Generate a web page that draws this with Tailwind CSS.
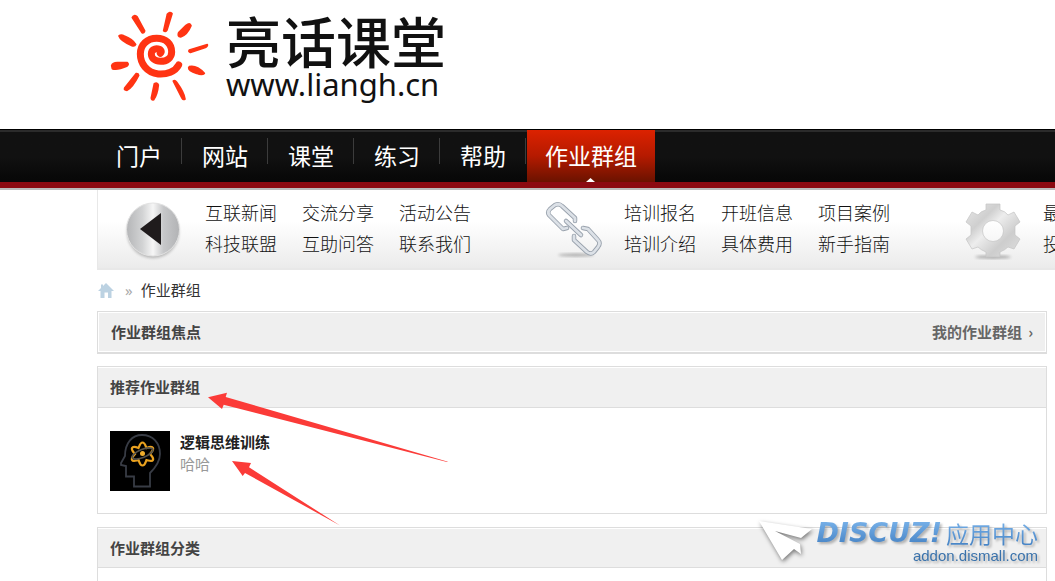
<!DOCTYPE html>
<html lang="zh-CN">
<head>
    <meta charset="UTF-8">
    <meta name="viewport" content="width=device-width, initial-scale=1.0">
    <title>作业群组 - 亮话课堂</title>
    <script src="https://cdn.jsdelivr.net/npm/@tailwindcss/browser@4"></script>
</head>
<body class="relative bg-white text-[#333] text-[15px] font-['Noto_Sans_CJK_SC',sans-serif] overflow-x-hidden">
    <!-- Logo -->
    <header class="pl-[110px] h-[129px]">
        <a href="#" class="inline-flex items-start gap-4 pt-[10px]">
            <svg class="w-[100px] h-[93px] shrink-0" viewBox="30 30 300 279" fill="none" stroke="#ff3413" stroke-linecap="round">
                <path stroke-width="21" d="M236 195C226 215 200 224 175 222C140 218 121 190 121 162C121 134 142 115 170 115C198 115 215 132 215 156C215 174 200 184 182 184C164 184 154 174 154 162C154 150 164 145 174 147C184 149 186 155 181 160"/>
                <g fill="#ff3413" stroke-width="5" stroke-linejoin="round">
                    <path d="M97 53Q101 43 111 50L134 93Q133 100 126 98Z"/>
                    <path d="M202 43Q209 33 216 41L201 90Q196 98 191 92Z"/>
                    <path d="M258 76Q270 67 273 77Q262 104 242 111Q231 110 236 98Z"/>
                    <path d="M57 108Q63 103 73 108Q97 117 107 133Q104 140 96 137Q62 123 57 108Z"/>
                    <path d="M35 197Q38 187 55 188L82 188Q88 193 80 199Q50 212 37 206Z"/>
                    <path d="M268 200Q290 195 313 220Q306 227 290 220Q265 213 266 203Z"/>
                    <path d="M108 221Q115 220 116 226Q98 262 81 271Q71 271 74 264Z"/>
                    <path d="M163 251Q172 246 175 255Q172 285 161 299Q154 301 154 294Z"/>
                    <path d="M322 134Q324 138 314 143L271 157Q264 155 268 150Z"/>
                    <path d="M220 243Q225 240 230 247Q252 277 255 297Q250 301 246 294Z"/>
                </g>
            </svg>
            <span class="flex flex-col text-[#111]">
                <span class="text-[55px] leading-[58px] font-medium">亮话课堂</span>
                <span class="text-[31px] leading-[32px] font-['Noto_Sans',sans-serif]">www.liangh.cn</span>
            </span>
        </a>
    </header>

    <!-- Main nav -->
    <nav class="h-[61px] border-t border-black border-b-2 border-b-[#bbb] bg-[#8c0a11]">
        <div class="h-[52px] border-t-2 border-[#2b2b2b] bg-linear-to-b from-[#111] via-[#111] to-[#070707]">
            <ul class="-mt-[2px] h-[52px] pl-[97px] flex text-[23px] leading-[50px] text-white">
                <li class="flex"><a href="#" class="px-[19px]">门户</a><i class="w-[2px] h-[26px] mt-2 border-l border-[#3c3c3c]"></i></li>
                <li class="flex"><a href="#" class="px-[19px]">网站</a><i class="w-[2px] h-[26px] mt-2 border-l border-[#3c3c3c]"></i></li>
                <li class="flex"><a href="#" class="px-[19px]">课堂</a><i class="w-[2px] h-[26px] mt-2 border-l border-[#3c3c3c]"></i></li>
                <li class="flex"><a href="#" class="px-[19px]">练习</a><i class="w-[2px] h-[26px] mt-2 border-l border-[#3c3c3c]"></i></li>
                <li class="flex"><a href="#" class="px-[19px]">帮助</a><i class="w-[2px] h-[26px] mt-2 border-l border-[#3c3c3c]"></i></li>
                <li class="relative bg-linear-to-b from-[#dc2200] via-[#b51a00] to-[#6b1200]">
                    <a href="#" class="block px-[18px]">作业群组</a>
                    <svg class="absolute bottom-0 left-1/2 -ml-[5px] w-[9px] h-1" viewBox="0 0 9 4" fill="#fff"><path d="M0 4L4.500 0L9 4Z"/></svg>
                </li>
            </ul>
        </div>
    </nav>

    <!-- Sub nav -->
    <div class="ml-[97px] h-20 border-l border-b-2 border-[#e8e8e8] bg-linear-to-b from-white from-40% to-[#ebebeb] overflow-hidden">
        <div class="flex w-max text-[18px] leading-[31px] font-light text-[#111] pt-[7px]">
            <section class="w-[419px] shrink-0 flex">
                <svg class="w-[60px] h-[60px] ml-[25px] mr-[22px] mt-1 shrink-0" viewBox="0 0 60 60">
                    <defs>
                        <linearGradient id="metal" x1="0" y1="0" x2="1" y2="0">
                            <stop offset="0" stop-color="#b4b5b7"/><stop offset=".3" stop-color="#d2d3d4"/>
                            <stop offset=".5" stop-color="#f6f6f6"/><stop offset=".7" stop-color="#c6c7c9"/>
                            <stop offset="1" stop-color="#b2b3b5"/>
                        </linearGradient>
                        <filter id="soft" x="-50%" y="-50%" width="200%" height="200%"><feGaussianBlur stdDeviation="1.5"/></filter>
                    </defs>
                    <circle cx="30" cy="31" r="26" fill="#000" opacity=".25" filter="url(#soft)"/>
                    <circle cx="30" cy="28.500" r="26.500" fill="url(#metal)" stroke="#e3e3e3"/>
                    <path d="M17 28L38 12V44Z" fill="#1f1b1c"/>
                </svg>
                <div class="grid grid-cols-[72px_72px_72px] gap-x-[25px] content-start whitespace-nowrap">
                    <a href="#">互联新闻</a><a href="#">交流分享</a><a href="#">活动公告</a>
                    <a href="#">科技联盟</a><a href="#">互助问答</a><a href="#">联系我们</a>
                </div>
            </section>
            <section class="w-[419px] shrink-0 flex">
                <svg class="w-[60px] h-[60px] ml-[25px] mr-[22px] mt-1 shrink-0" viewBox="0 0 60 60" fill="none" stroke-linecap="round" stroke-linejoin="round">
                    <ellipse cx="34" cy="54" rx="18" ry="1.500" fill="#000" opacity=".3" filter="url(#soft)"/>
                    <g stroke="#98a1ac" stroke-width="4.500">
                        <path d="M25 27L21 28L7 14Q5 11 8 8L13 4Q17 2 20 5L33 17V20"/>
                        <path d="M32 35V39L45 51Q49 54 52 51L56 46Q59 42 56 39L46 28L41 27"/>
                        <path d="M24 20L39 34"/>
                    </g>
                    <g stroke="#dce1e7" stroke-width="2.800">
                        <path d="M25 27L21 28L7 14Q5 11 8 8L13 4Q17 2 20 5L33 17V20"/>
                        <path d="M32 35V39L45 51Q49 54 52 51L56 46Q59 42 56 39L46 28L41 27"/>
                        <path d="M24 20L39 34"/>
                    </g>
                </svg>
                <div class="grid grid-cols-[72px_72px_72px] gap-x-[25px] content-start whitespace-nowrap">
                    <a href="#">培训报名</a><a href="#">开班信息</a><a href="#">项目案例</a>
                    <a href="#">培训介绍</a><a href="#">具体费用</a><a href="#">新手指南</a>
                </div>
            </section>
            <section class="w-[419px] shrink-0 flex">
                <svg class="w-[60px] h-[60px] ml-[25px] mr-[22px] mt-1 shrink-0" viewBox="0 0 60 60">
                    <defs>
                        <linearGradient id="gear" x1="0" y1="0" x2="1" y2="1">
                            <stop offset="0" stop-color="#e8e8e8"/><stop offset=".3" stop-color="#cfcfcf"/>
                            <stop offset=".45" stop-color="#ededed"/><stop offset=".7" stop-color="#cdcdcd"/>
                            <stop offset="1" stop-color="#e0e0e0"/>
                        </linearGradient>
                    </defs>
                    <ellipse cx="32" cy="56" rx="18" ry="1.500" fill="#000" opacity=".35" filter="url(#soft)"/>
                    <path transform="translate(1 -1)" fill="url(#gear)" stroke="#c4c4c4" stroke-width=".7" stroke-linejoin="round" fill-rule="evenodd" d="M24 4H38V10Q43 11 46 15L52 12L58 22L53 26V35L58 39L52 49L46 47Q43 50 38 52V57H24V52Q19 50 16 47L10 49L4 39L9 35V26L4 22L10 12L16 15Q19 11 24 10ZM31 20.500A10.500 10.500 0 1 0 31 41.500A10.500 10.500 0 1 0 31 20.500Z"/>
                </svg>
                <div class="grid grid-cols-[72px_72px_72px] gap-x-[25px] content-start whitespace-nowrap">
                    <a href="#">最新动态</a>
                    <a href="#" class="col-start-1">投诉建议</a>
                </div>
            </section>
        </div>
    </div>

    <main class="ml-[97px] mr-2">
        <!-- Breadcrumb -->
        <div class="h-[41px] flex items-center">
            <a href="#" aria-label="首页">
                <svg class="w-4 h-[15px] ml-px" viewBox="0 0 16 15" fill="#bcd2e2"><path d="M8 0L16 8H13.500V15H10V9.500H6.500V15H2.500V8H0L3 5V1.500H5V3Z"/></svg>
            </a>
            <span class="ml-[11px] mr-2 text-[#aaa] text-[15px] font-['Noto_Sans',sans-serif]">»</span>
            <a href="#">作业群组</a>
        </div>

        <div class="h-[43px] border border-b-2 border-[#ddd] bg-[#efefef] shadow-[inset_0_0_0_1px_#fff] flex items-center justify-between px-[13px] font-bold text-[#444]">
            <h1>作业群组焦点</h1>
            <a href="#" class="flex gap-[6px] text-[#666]">我的作业群组<span>›</span></a>
        </div>

        <section class="mt-3 border border-[#ddd]">
            <h2 class="h-[41px] leading-[40px] px-3 border-b border-[#ddd] bg-[#f0f0f0] shadow-[inset_0_1px_0_#fff] font-bold text-[#444]">推荐作业群组</h2>
            <div class="flex gap-[10px] pl-3 pt-[23px] pb-[22px]">
                <svg class="w-[60px] h-[60px] shrink-0 bg-black" viewBox="0 0 60 60" fill="none">
                    <path stroke="#383c45" stroke-width="1.800" d="M24 55.500V45.500H16V35L11 34V32L15 25C15 12 22 4 32 4C43 4 50 12 50 23C50 30 46 36 40 42V55.500Z"/>
                    <path stroke="#e9a11f" stroke-width="2.200" d="M32.500 11.500C35 11.500 35.500 15 36.500 17C39 16 42 15 43 17C44 19 41.500 21 40 23C41.500 25 44 27 43 29C42 31 39 29.500 36.500 29C35.500 31.500 35 34.500 32.500 34.500C30 34.500 29.500 31.500 28.500 29C26 29.500 23 31 22 29C21 27 23.500 25 25 23C23.500 21 21 19 22 17C23 15 26 16 28.500 17C29.500 15 30 11.500 32.500 11.500Z"/>
                    <ellipse cx="32.500" cy="22.500" rx="4" ry="11" stroke="#55524c" stroke-width="1.700" transform="rotate(68 32.500 22.500)"/>
                    <circle cx="32.500" cy="22.500" r="2.500" fill="#f0ad2c"/>
                </svg>
                <div class="leading-[22px]">
                    <a href="#" class="block font-bold text-[#222]">逻辑思维训练</a>
                    <p class="text-[#999]">哈哈</p>
                </div>
            </div>
        </section>

        <section class="mt-[13px] border border-b-0 border-[#ddd]">
            <h2 class="h-10 leading-[40px] px-3 border-b border-[#ddd] bg-[#f0f0f0] shadow-[inset_0_1px_0_#fff] font-bold text-[#444]">作业群组分类</h2>
            <div class="h-[13px]"></div>
        </section>
    </main>

    <!-- Pointer arrows -->
    <svg class="absolute left-[200px] top-[385px] w-[260px] h-[150px] pointer-events-none" viewBox="200 385 260 150" fill="#fb3b38">
        <path d="M208 397.300L227 392.700L225.700 397L448 461.800L447 462L223.700 404.700L222 409Z"/>
        <path d="M232 461L251 463L249 467.300L340 525.500L245 473L242.700 476Z"/>
    </svg>

    <!-- Watermark -->
    <div class="absolute right-[17px] top-[517px] flex items-start pointer-events-none">
        <svg class="w-[58px] h-[50px] drop-shadow-[1px_2px_2px_rgb(0_0_0/0.5)]" viewBox="0 0 58 50" fill="#fff">
            <path d="M1 4L54 12L43 21L17 14L42 27L43 37L36 32L24 43Z"/>
        </svg>
        <div class="flex flex-col items-end drop-shadow-[2px_2px_1px_rgb(0_0_0/0.25)]">
            <div class="flex items-center gap-1 leading-[32px] bg-linear-to-b from-[#7fb8ee] to-[#3f7dc0] bg-clip-text text-transparent whitespace-nowrap">
                <span class="text-[27px] font-bold italic font-['DejaVu_Sans',sans-serif]">DISCUZ!</span>
                <span class="text-[23px] leading-[28px]">应用中心</span>
            </div>
            <span class="text-[15px] leading-[14px] text-[#3a72ab] font-['Liberation_Sans',sans-serif]">addon.dismall.com</span>
        </div>
    </div>
</body>
</html>
